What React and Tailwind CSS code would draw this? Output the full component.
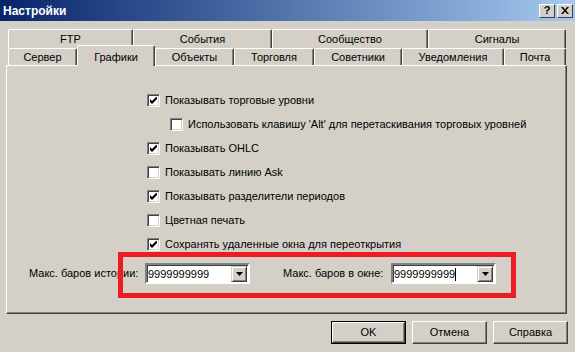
import React from "react";

const row1 = [
  { label: "FTP", w: "w-[125px]" },
  { label: "События", w: "w-[139px]" },
  { label: "Сообщество", w: "w-[156px]" },
  { label: "Сигналы", w: "w-[138px]" },
];

const row2 = [
  { label: "Сервер", w: "w-[69px]" },
  { label: "Графики", w: "w-[78px]", active: true },
  { label: "Объекты", w: "w-[79px]" },
  { label: "Торговля", w: "w-[80px]" },
  { label: "Советники", w: "w-[88px]" },
  { label: "Уведомления", w: "w-[102px]" },
  { label: "Почта", w: "w-[62px]" },
];

const options = [
  { label: "Показывать торговые уровни", checked: true },
  { label: "Использовать клавишу 'Alt' для перетаскивания торговых уровней", checked: false, indent: true },
  { label: "Показывать OHLC", checked: true },
  { label: "Показывать линию Ask", checked: false },
  { label: "Показывать разделители периодов", checked: true },
  { label: "Цветная печать", checked: false },
  { label: "Сохранять удаленные окна для переоткрытия", checked: true },
];

function Tab({ label, w, active }) {
  if (active) {
    return (
      <div
        className={`${w} relative z-10 -mt-[3px] h-[21px] flex items-start justify-center pt-[3px] bg-[#d4d0c8] border-l border-t border-white border-r border-r-[#404040] rounded-t-[2px] shadow-[inset_-1px_0_0_#808080]`}
      >
        {label}
      </div>
    );
  }
  return (
    <div
      className={`${w} h-full flex items-center justify-center border-l border-t border-white border-r border-r-[#404040] rounded-t-[2px] shadow-[inset_-1px_0_0_#808080]`}
    >
      {label}
    </div>
  );
}

function Checkbox({ checked }) {
  return (
    <div className="w-[13px] h-[13px] shrink-0 bg-white border border-t-[#808080] border-l-[#808080] border-b-white border-r-white shadow-[inset_1px_1px_0_#404040,inset_-1px_-1px_0_#d4d0c8] flex items-center justify-center">
      {checked && (
        <svg width="7" height="7" viewBox="0 0 7 7">
          <path d="M0 2v3l2 2 5-5V-1L2 4z" fill="#000" />
        </svg>
      )}
    </div>
  );
}

function Combo({ value, caret }) {
  return (
    <div className="w-[105px] h-[21px] flex bg-white border-2 border-t-[#808080] border-l-[#808080] border-b-white border-r-white shadow-[inset_1px_1px_0_#404040]">
      <div className="flex-1 flex items-center pl-[1px] pt-[1px]">
        <span>{value}</span>
        {caret && <span className="w-px h-[13px] bg-black" />}
      </div>
      <div className="w-[16px] h-[16px] mt-[1px] mr-[1px] bg-[#d4d0c8] border border-t-[#d4d0c8] border-l-[#d4d0c8] border-b-[#404040] border-r-[#404040] shadow-[inset_1px_1px_0_#fff,inset_-1px_-1px_0_#808080] flex items-center justify-center">
        <svg width="7" height="4" viewBox="0 0 7 4">
          <path d="M0 0h7L3.5 4z" fill="#000" />
        </svg>
      </div>
    </div>
  );
}

function Button({ label, primary }) {
  return (
    <div
      className={`w-[75px] h-[23px] flex items-center justify-center ${
        primary ? "border border-black" : ""
      }`}
    >
      <div className="w-full h-full flex items-center justify-center border border-t-white border-l-white border-b-[#404040] border-r-[#404040] shadow-[inset_-1px_-1px_0_#808080]">
        {label}
      </div>
    </div>
  );
}

export default function App() {
  return (
    <div
      className="relative w-[575px] h-[352px] bg-[#d4d0c8] flex flex-col text-[11px] text-black overflow-hidden"
      style={{ fontFamily: "'Liberation Sans', Arial, sans-serif" }}
    >
      {/* заголовок окна */}
      <div className="h-[21px] flex items-center justify-between pl-[3px] pr-[2px] bg-gradient-to-r from-[#0a246a] to-[#a6caf0]">
        <span className="text-white font-bold text-[12px]">Настройки</span>
        <div className="flex gap-[2px]">
          <div className="w-[16px] h-[14px] bg-[#d4d0c8] border border-t-white border-l-white border-b-[#404040] border-r-[#404040] flex items-center justify-center font-bold text-[11px] leading-none">
            ?
          </div>
          <div className="w-[16px] h-[14px] bg-[#d4d0c8] border border-t-white border-l-white border-b-[#404040] border-r-[#404040] flex items-center justify-center">
            <svg width="8" height="7" viewBox="0 0 8 7">
              <path d="M0 0h2l2 2.5L6 0h2L5 3.5 8 7H6L4 4.5 2 7H0l3-3.5z" fill="#000" />
            </svg>
          </div>
        </div>
      </div>

      {/* вкладки */}
      <div className="pt-[8px]">
        <div className="flex h-[19px] pl-[8px]">
          {row1.map((t) => (
            <Tab key={t.label} {...t} />
          ))}
        </div>
        <div className="flex h-[17px] pl-[8px]">
          {row2.map((t) => (
            <Tab key={t.label} {...t} />
          ))}
        </div>
      </div>

      {/* панель */}
      <div className="ml-[6px] w-[561px] h-[249px] border border-t-white border-l-white border-r-[#404040] border-b-[#404040] shadow-[inset_-1px_-1px_0_#808080] flex flex-col pt-[22px]">
        {options.map((o) => (
          <div
            key={o.label}
            className={`h-[24px] flex items-center gap-[5px] ${o.indent ? "pl-[163px]" : "pl-[140px]"}`}
          >
            <Checkbox checked={o.checked} />
            <span>{o.label}</span>
          </div>
        ))}
        <div className="mt-[7px] flex items-center pl-[22px]">
          <span className="w-[116px]">Макс. баров истории:</span>
          <Combo value="9999999999" />
          <span className="ml-[33px] w-[108px]">Макс. баров в окне:</span>
          <Combo value="9999999999" caret />
        </div>
      </div>

      {/* кнопки */}
      <div className="mt-[7px] flex justify-end gap-[6px] pr-[7px]">
        <Button label="OK" primary />
        <Button label="Отмена" />
        <Button label="Справка" />
      </div>

      {/* красная рамка */}
      <div className="absolute left-[118px] top-[252px] w-[398px] h-[46px] border-[5px] border-[#ed1c24]" />
    </div>
  );
}
